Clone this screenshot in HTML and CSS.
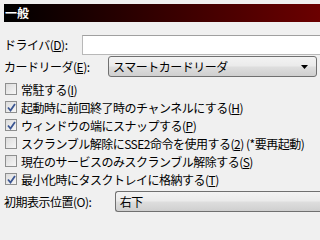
FILE: index.html
```html
<!DOCTYPE html>
<html lang="ja">
<head>
<meta charset="utf-8">
<link rel="stylesheet" href="styles.css">
</head>
<body>
<div class="page">
  <div class="header">一般</div>
  <div class="row driver">
    <span class="label">ドライバ(<u>D</u>):</span>
    <div class="input"></div>
  </div>
  <div class="row card">
    <span class="label">カードリーダ(<u>E</u>):</span>
    <div class="combo combo-card">
      <span class="combo-text">スマートカードリーダ</span>
      <svg class="arrow" width="7" height="4" viewBox="0 0 7 4"><path d="M0 0H7L3.5 4Z" fill="#000"/></svg>
    </div>
  </div>
  <div class="checks">
    <div class="check"><span class="box"></span><span>常駐する(<u>I</u>)</span></div>
    <div class="check"><span class="box on"><svg width="9" height="9" viewBox="0 0 9 9"><path d="M1 4.5L3.5 7.5L8 1" fill="none" stroke="#3b5692" stroke-width="1.8"/></svg></span><span>起動時に前回終了時のチャンネルにする(<u>H</u>)</span></div>
    <div class="check"><span class="box on"><svg width="9" height="9" viewBox="0 0 9 9"><path d="M1 4.5L3.5 7.5L8 1" fill="none" stroke="#3b5692" stroke-width="1.8"/></svg></span><span>ウィンドウの端にスナップする(<u>P</u>)</span></div>
    <div class="check"><span class="box"></span><span>スクランブル解除にSSE2命令を使用する(<u>2</u>) (*要再起動)</span></div>
    <div class="check"><span class="box"></span><span>現在のサービスのみスクランブル解除する(<u>S</u>)</span></div>
    <div class="check"><span class="box on"><svg width="9" height="9" viewBox="0 0 9 9"><path d="M1 4.5L3.5 7.5L8 1" fill="none" stroke="#3b5692" stroke-width="1.8"/></svg></span><span>最小化時にタスクトレイに格納する(<u>T</u>)</span></div>
  </div>
  <div class="row pos">
    <span class="label">初期表示位置(O):</span>
    <div class="combo combo-pos">
      <span class="combo-text">右下</span>
    </div>
  </div>
</div>
</body>
</html>
```

FILE: styles.css
```css
html, body {
  margin: 0;
  padding: 0;
  background: #f0f0f0;
}
body {
  width: 320px;
  height: 240px;
  overflow: hidden;
  font-family: "Noto Sans CJK JP", "Noto Sans", sans-serif;
  font-size: 12px;
  letter-spacing: -0.5px;
  color: #000;
}
.page {
  padding: 4px 0 0 4px;
}
.header {
  height: 18px;
  line-height: 18px;
  padding-left: 1px;
  color: #fff;
  font-weight: bold;
  letter-spacing: 0;
  background: linear-gradient(to right, #000 0%, #1a0000 25%, #6b0000 100%);
}
u {
  text-decoration: underline;
  text-underline-offset: 1px;
}
.row {
  display: flex;
  align-items: center;
}
.label {
  line-height: 14px;
  white-space: nowrap;
}
.driver {
  margin-top: 13px;
  height: 20px;
}
.driver .label {
  width: 78px;
}
.input {
  flex: 1;
  height: 18px;
  background: #fff;
  border: 1px solid #b8b8b8;
  border-top-color: #a0a0a0;
  border-right: none;
}
.card {
  margin-top: 1px;
  height: 21px;
}
.card .label {
  width: 104px;
}
.combo {
  box-sizing: border-box;
  height: 21px;
  border: 1px solid #707070;
  border-radius: 3px;
  background: linear-gradient(#f3f3f3 0%, #ebebeb 45%, #dddddd 55%, #cfcfcf 100%);
  display: flex;
  align-items: center;
}
.combo-card {
  width: 209px;
  padding: 0 0 0 4px;
  justify-content: space-between;
}
.combo-card .arrow {
  margin-right: 8px;
}
.combo-text {
  white-space: nowrap;
}
.checks {
  margin-top: 3px;
  display: flex;
  flex-direction: column;
}
.check {
  height: 18px;
  display: flex;
  align-items: center;
  white-space: nowrap;
}
.box {
  box-sizing: border-box;
  width: 12px;
  height: 12px;
  margin: 0 4px 0 1px;
  border: 1px solid #8e8f8f;
  background: linear-gradient(135deg, #dcdcdc, #f6f6f6);
  display: flex;
  align-items: center;
  justify-content: center;
  flex-shrink: 0;
}
.pos {
  margin-top: 3px;
  height: 21px;
}
.pos .label {
  width: 119px;
}
.combo-pos {
  width: 220px;
  padding-left: 4px;
  border-right: none;
  border-radius: 3px 0 0 3px;
}
```
